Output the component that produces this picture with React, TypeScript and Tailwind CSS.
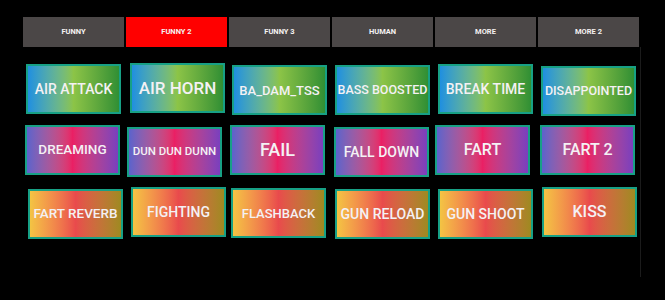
const TABS = ['FUNNY', 'FUNNY 2', 'FUNNY 3', 'HUMAN', 'MORE', 'MORE 2']

type Kind = 'green' | 'purple' | 'orange'

const GRAD: Record<Kind, string> = {
  green: 'bg-linear-to-r from-[#1f8fe0] via-[#8cc447] to-[#2f8f34]',
  purple: 'bg-linear-to-r from-[#5a63cc] via-[#ea1f64] to-[#7a3fbe]',
  orange: 'bg-linear-to-r from-[#f3c443] via-[#e94a4c] to-[#9e8a20]',
}

// label, text size, offset inside the column cell
const ROWS: { kind: Kind; pads: { label: string; text: string; off: string }[] }[] = [
  {
    kind: 'green',
    pads: [
      { label: 'AIR ATTACK', text: 'text-[14px]', off: 'ml-[3px] mt-[1px]' },
      { label: 'AIR HORN', text: 'text-[17px]', off: 'ml-[4px] mt-0' },
      { label: 'BA_DAM_TSS', text: 'text-[13px]', off: 'ml-[3px] mt-[2px]' },
      { label: 'BASS BOOSTED', text: 'text-[12.5px]', off: 'ml-[3px] mt-[2px]' },
      { label: 'BREAK TIME', text: 'text-[14px]', off: 'ml-[3px] mt-[1px]' },
      { label: 'DISAPPOINTED', text: 'text-[12.5px]', off: 'ml-[3px] mt-[3px]' },
    ],
  },
  {
    kind: 'purple',
    pads: [
      { label: 'DREAMING', text: 'text-[13.5px]', off: 'ml-[2px] mt-0' },
      { label: 'DUN DUN DUNN', text: 'text-[11.5px]', off: 'ml-[1px] mt-[2px]' },
      { label: 'FAIL', text: 'text-[18px]', off: 'ml-[1px] mt-0' },
      { label: 'FALL DOWN', text: 'text-[14px]', off: 'ml-[2px] mt-[2px]' },
      { label: 'FART', text: 'text-[16px]', off: 'ml-0 mt-0' },
      { label: 'FART 2', text: 'text-[16px]', off: 'ml-[2px] mt-0' },
    ],
  },
  {
    kind: 'orange',
    pads: [
      { label: 'FART REVERB', text: 'text-[13.5px]', off: 'ml-[5px] mt-[2px]' },
      { label: 'FIGHTING', text: 'text-[14px]', off: 'ml-[5px] mt-0' },
      { label: 'FLASHBACK', text: 'text-[13px]', off: 'ml-[2px] mt-[1px]' },
      { label: 'GUN RELOAD', text: 'text-[14px]', off: 'ml-[3px] mt-[2px]' },
      { label: 'GUN SHOOT', text: 'text-[14px]', off: 'ml-[3px] mt-[2px]' },
      { label: 'KISS', text: 'text-[16px]', off: 'ml-[4px] mt-0' },
    ],
  },
]

export default function App() {
  return (
    <div className="w-[665px] h-[300px] bg-black overflow-hidden" style={{ fontFamily: 'Roboto, "Liberation Sans", sans-serif' }}>
      <div className="ml-[23px] pt-[17px] w-[617px]">
        {/* Tabs */}
        <div className="flex gap-[2px]">
          {TABS.map((t, i) => (
            <div
              key={t}
              className={`w-[101px] h-[30px] flex items-center justify-center text-[7.5px] font-bold text-[#f4f2f2] ${i === 1 ? 'bg-[#ff0000]' : 'bg-[#4b4747]'}`}
            >
              {t}
            </div>
          ))}
        </div>

        {/* Sound pads */}
        <div className="h-[230px] w-[618px] border-r border-[#1b1b1b] pt-[16px] flex flex-col gap-[10px]">
          {ROWS.map((row, r) => (
            <div key={r} className="flex gap-[2px] h-[52px]">
              {row.pads.map((p) => (
                <div key={p.label} className="w-[101px]">
                  <button
                    className={`${p.off} ${GRAD[row.kind]} ${p.text} w-[95px] h-[50px] border-2 border-[#17a085] flex items-center justify-center font-medium text-[#f4f1f4] whitespace-nowrap leading-none`}
                  >
                    {p.label}
                  </button>
                </div>
              ))}
            </div>
          ))}
        </div>
      </div>
    </div>
  )
}
